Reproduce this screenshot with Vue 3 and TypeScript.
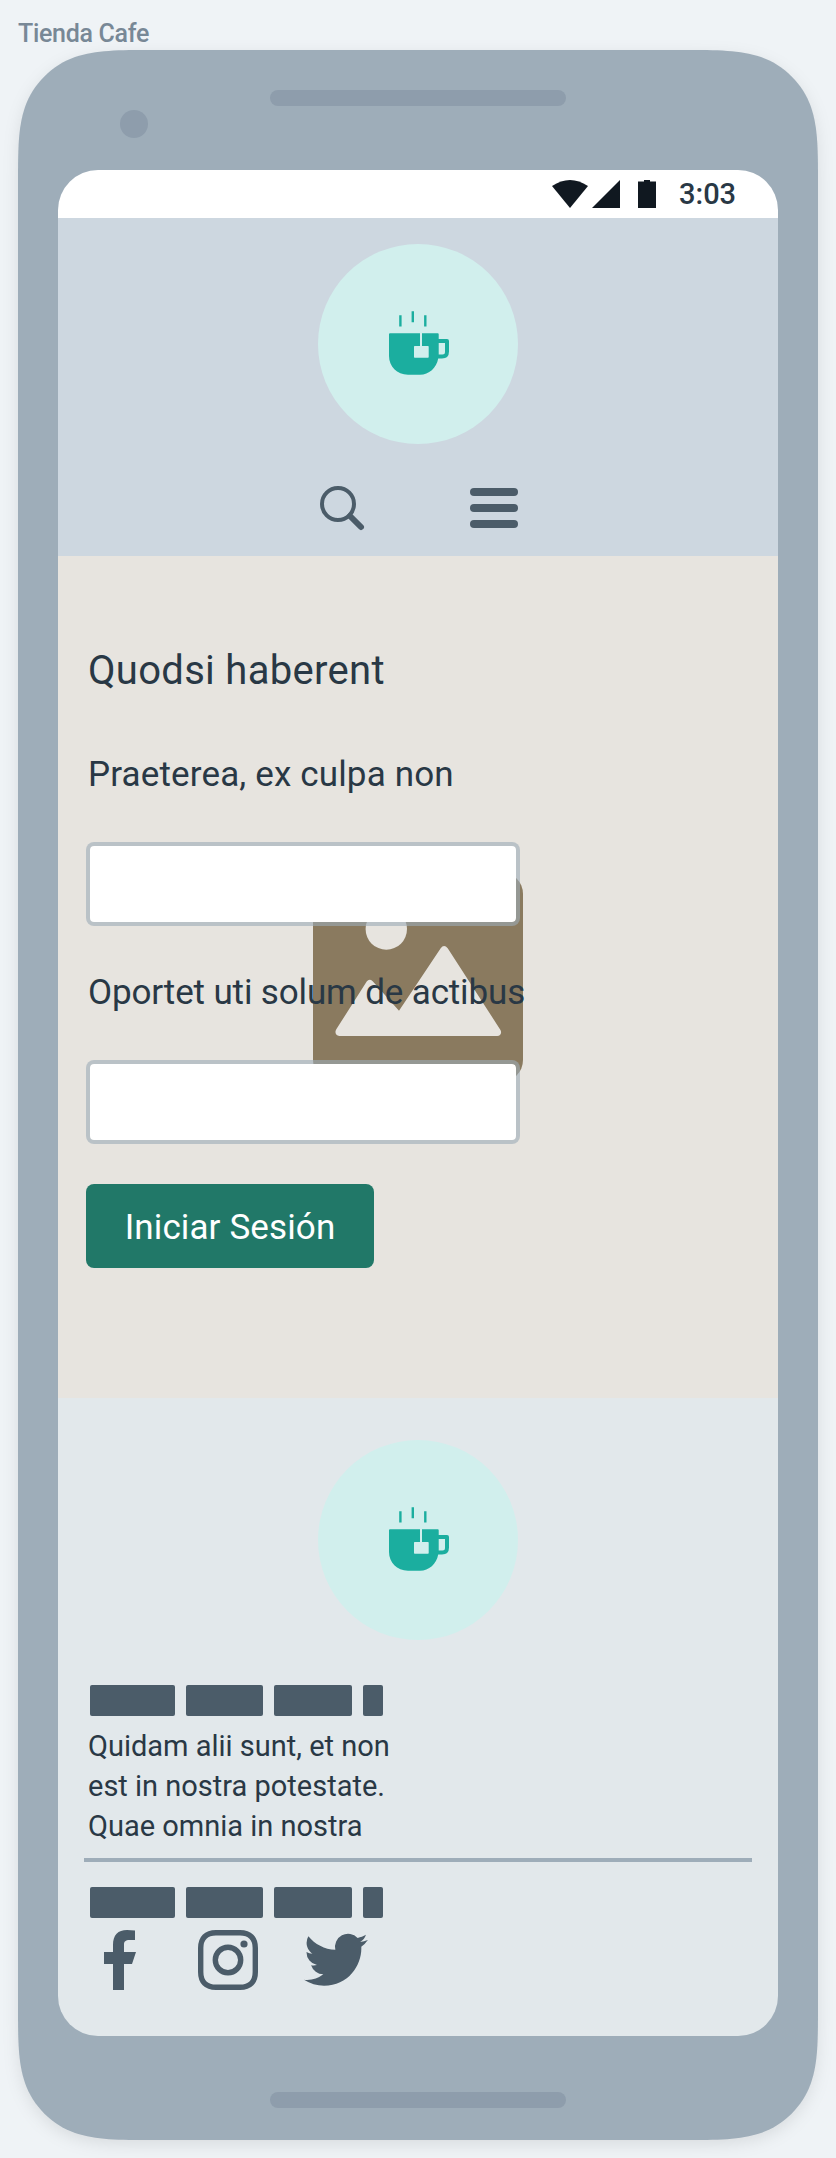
<script setup lang="ts">
const redactedWidths: number[] = [84.8, 76.9, 78, 20.2]
const paragraph: string[] = [
  'Quidam alii sunt, et non',
  'est in nostra potestate.',
  'Quae omnia in nostra',
]
</script>

<template>
  <div class="canvas">
    <div class="frame-name">Tienda Cafe</div>
    <div class="phone">
      <svg class="shell" viewBox="0 0 800 2090" width="800" height="2090">
        <path
          d="M137 0H663C702 0 721 0 743 7C766 15 785 34 793 57C800 78 800 98 800 137V1953C800 1992 800 2012 793 2033C785 2056 766 2075 743 2083C721 2090 702 2090 663 2090H137C98 2090 79 2090 57 2083C34 2075 15 2056 7 2033C0 2012 0 1992 0 1953V137C0 98 0 78 7 57C15 34 34 15 57 7C79 0 98 0 137 0Z"
        />
      </svg>
      <div class="top-bezel">
        <span class="camera"></span>
        <span class="speaker"></span>
      </div>
      <div class="screen">
        <div class="status">
          <svg width="104" height="28" viewBox="0 0 104 28">
            <path d="M0 6Q18 -6 36 6L18 28Z" />
            <path d="M40 28L68 0V28Z" />
            <path d="M86 1.5H92V0H98V1.5H104V28H86Z" />
          </svg>
          <span class="time">3:03</span>
        </div>

        <header class="header">
          <div class="logo">
            <svg width="62" height="66" viewBox="0 0 62 66">
              <path class="steam" d="M12.4 5.3V16.6M24.8 1.2V12.2M37.3 5.3V16.6" />
              <path
                class="cup"
                d="M2 23.3H32V36H26.7Q26 36 26 36.7V47Q26 47.7 26.7 47.7H40Q40.7 47.7 40.7 47V36.7Q40.7 36 40 36H34V23.3H49.8Q50.7 23.3 50.7 24.2V29H59Q61 29 61 31V41.5Q61 48.5 54 48.5H50.2C48.5 58 41 64.7 32 64.7H20C9 64.7 1 56.5 1 46V24.3Q1 23.3 2 23.3ZM50.7 33V44.5H54.5Q57 44.5 57 42V33Z"
              />
            </svg>
          </div>
          <div class="actions">
            <svg width="46" height="46" viewBox="0 0 46 46">
              <circle cx="18" cy="18" r="16" fill="none" stroke="#4b5c69" stroke-width="4" />
              <path d="M30 30L41 41" stroke="#4b5c69" stroke-width="6" stroke-linecap="round" />
            </svg>
            <div class="menu"><i></i><i></i><i></i></div>
          </div>
        </header>

        <main class="main">
          <svg class="picture" width="210" height="210" viewBox="0 0 210 210">
            <rect width="210" height="210" rx="22" fill="#8a7a5f" />
            <circle cx="73.3" cy="57" r="20.7" fill="#e7e4df" />
            <path
              fill="#e7e4df"
              d="M23.3 157.3L53.7 109.5Q56.3 106.3 59.7 109.3L86 138.7L127.7 76.3Q131 71.5 134.7 76.3L187.3 157.7C189.3 161 187.3 164 184.3 164H26.3C23 164 21.3 160.5 23.3 157.3Z"
            />
          </svg>
          <form class="form" @submit.prevent>
            <h1>Quodsi haberent</h1>
            <label class="first" for="user">Praeterea, ex culpa non</label>
            <input id="user" type="text" />
            <label class="second" for="pass">Oportet uti solum de actibus</label>
            <input id="pass" type="text" />
            <button type="submit">Iniciar Sesión</button>
          </form>
        </main>

        <footer class="footer">
          <div class="logo">
            <svg width="62" height="66" viewBox="0 0 62 66">
              <path class="steam" d="M12.4 5.3V16.6M24.8 1.2V12.2M37.3 5.3V16.6" />
              <path
                class="cup"
                d="M2 23.3H32V36H26.7Q26 36 26 36.7V47Q26 47.7 26.7 47.7H40Q40.7 47.7 40.7 47V36.7Q40.7 36 40 36H34V23.3H49.8Q50.7 23.3 50.7 24.2V29H59Q61 29 61 31V41.5Q61 48.5 54 48.5H50.2C48.5 58 41 64.7 32 64.7H20C9 64.7 1 56.5 1 46V24.3Q1 23.3 2 23.3ZM50.7 33V44.5H54.5Q57 44.5 57 42V33Z"
              />
            </svg>
          </div>
          <div class="redacted">
            <i v-for="(w, i) in redactedWidths" :key="i" :style="{ width: w + 'px' }"></i>
          </div>
          <p class="copy">
            <span v-for="line in paragraph" :key="line">{{ line }}</span>
          </p>
          <hr />
          <div class="redacted">
            <i v-for="(w, i) in redactedWidths" :key="i" :style="{ width: w + 'px' }"></i>
          </div>
          <div class="social">
            <svg width="32" height="60" viewBox="4 0 32 60">
              <path d="M13 60V34H4V22H13V15C13 5 18 0 27 0Q31 0 35 .5V10H29.500C25.500 10 24 11.500 24 14.500V22H36L32 34H24V60Z" />
            </svg>
            <svg class="instagram" width="60" height="60" viewBox="0 0 60 60">
              <path d="M18 2.700H42C52 2.700 57.300 8 57.300 18V42C57.300 52 52 57.300 42 57.300H18C8 57.300 2.700 52 2.700 42V18C2.700 8 8 2.700 18 2.700Z" />
              <circle cx="30" cy="30" r="12.700" />
              <circle class="dot" cx="46" cy="14" r="3.600" />
            </svg>
            <svg width="64" height="60" viewBox="0 0 64 60">
              <path
                transform="translate(0 -2.200) scale(2.660)"
                d="M23.953 4.570a10 10 0 01-2.825.775 4.958 4.958 0 002.163-2.723c-.951.555-2.005.959-3.127 1.184a4.920 4.920 0 00-8.384 4.482C7.690 8.095 4.067 6.130 1.640 3.162a4.822 4.822 0 00-.666 2.475c0 1.710.870 3.213 2.188 4.096a4.904 4.904 0 01-2.228-.616v.060a4.923 4.923 0 003.946 4.827 4.996 4.996 0 01-2.212.085 4.936 4.936 0 004.604 3.417 9.867 9.867 0 01-6.102 2.105c-.390 0-.779-.023-1.170-.067a13.995 13.995 0 007.557 2.209c9.053 0 13.998-7.496 13.998-13.985 0-.210 0-.420-.015-.630A9.935 9.935 0 0024 4.590z"
              />
            </svg>
          </div>
        </footer>
      </div>
      <div class="bottom-bezel"><span class="speaker"></span></div>
    </div>
  </div>
</template>

<style>
body {
  background: #eff3f6;
}
</style>

<style scoped>
* {
  box-sizing: border-box;
}
.canvas {
  width: 836px;
  height: 2158px;
  padding: 18px 18px 0;
  overflow: hidden;
  background: #eff3f6;
  font-family: Roboto, "Liberation Sans", sans-serif;
  color: #293845;
}
svg {
  display: block;
}
.frame-name {
  height: 32px;
  line-height: 32px;
  font-size: 25px;
  font-weight: 500;
  letter-spacing: -0.3px;
  color: #788896;
}
.phone {
  position: relative;
  width: 800px;
  height: 2090px;
  padding: 0 40px;
}
.shell {
  position: absolute;
  inset: 0;
  overflow: visible;
  fill: #9eadb9;
  filter: drop-shadow(0 5px 8px rgba(0, 0, 0, 0.09));
}
.top-bezel,
.bottom-bezel {
  position: relative;
  display: flex;
}
.top-bezel {
  height: 120px;
}
.bottom-bezel {
  height: 104px;
  padding-top: 56px;
  justify-content: center;
}
.camera {
  width: 28px;
  height: 28px;
  margin: 60px 122px 0 62px;
  border-radius: 50%;
  background: #8e9dac;
}
.speaker {
  width: 296px;
  height: 16px;
  border-radius: 8px;
  background: #8e9dac;
}
.top-bezel .speaker {
  margin-top: 40px;
}
.screen {
  position: relative;
  height: 1866px;
  border-radius: 40px;
  overflow: hidden;
}
.status {
  display: flex;
  align-items: center;
  justify-content: flex-end;
  height: 48px;
  padding-right: 42px;
  background: #fff;
}
.status svg {
  fill: #101820;
}
.time {
  width: 56px;
  margin-left: 23px;
  margin-right: 1px;
  font-size: 29px;
  line-height: 48px;
  font-weight: 500;
  white-space: nowrap;
}
.header {
  display: flex;
  flex-direction: column;
  align-items: center;
  height: 338px;
  padding-top: 26px;
  background: #cdd7e0;
}
.logo {
  width: 200px;
  height: 200px;
  padding: 66px 0 0 70px;
  border-radius: 50%;
  background: #d1efed;
}
.steam {
  stroke: #1bae9f;
  stroke-width: 2.4;
}
.cup {
  fill: #1bae9f;
  fill-rule: evenodd;
}
.actions {
  display: flex;
  justify-content: space-between;
  width: 198px;
  margin: 42px 0 0 2px;
}
.menu {
  display: flex;
  flex-direction: column;
  gap: 8px;
  padding-top: 2px;
}
.menu i {
  width: 48px;
  height: 8px;
  border-radius: 4px;
  background: #4b5c69;
}
.main {
  position: relative;
  height: 842px;
  background: #e7e4df;
}
.picture {
  position: absolute;
  top: 316px;
  left: 255px;
}
.form {
  position: relative;
  display: flex;
  flex-direction: column;
  align-items: flex-start;
  padding: 91px 0 0 28px;
}
h1 {
  margin: 0 0 0 2px;
  font-size: 40px;
  line-height: 48px;
  font-weight: 400;
  letter-spacing: 0.3px;
}
label {
  margin-left: 2px;
  font-size: 35px;
  line-height: 44px;
  white-space: nowrap;
}
.first {
  margin-top: 58px;
  letter-spacing: 0.15px;
}
.second {
  margin-top: 45px;
  letter-spacing: -0.14px;
}
input {
  width: 434px;
  height: 84px;
  margin: 45px 0 0;
  border: 4px solid rgba(157, 171, 184, 0.6);
  border-radius: 8px;
  background: #fff;
  background-clip: padding-box;
  outline: none;
}
button {
  width: 288px;
  height: 84px;
  margin-top: 40px;
  padding: 2px 0 0;
  border: 0;
  border-radius: 8px;
  background: #217868;
  color: #fff;
  font-family: inherit;
  font-size: 35px;
  letter-spacing: 0.12px;
}
.footer {
  height: 638px;
  padding: 42px 26px 0;
  background: #e2e8eb;
}
.footer .logo {
  margin: 0 auto;
}
.redacted {
  display: flex;
  gap: 11px;
  height: 31px;
  margin: 45px 0 0 6px;
}
.redacted i {
  border-radius: 2px;
  background: #4b5c69;
}
.copy {
  display: flex;
  flex-direction: column;
  margin: 10px 0 12px 4px;
  font-size: 29px;
  line-height: 40px;
}
hr {
  height: 4px;
  margin: 0;
  border: 0;
  background: #9eadb9;
}
hr + .redacted {
  margin-top: 25px;
}
.social {
  display: flex;
  margin: 12px 0 0 20px;
  fill: #4b5c69;
}
.social .instagram {
  margin: 0 45.5px 0 62px;
  fill: none;
  stroke: #4b5c69;
  stroke-width: 5.4;
}
.social .dot {
  fill: #4b5c69;
  stroke: none;
}
</style>
